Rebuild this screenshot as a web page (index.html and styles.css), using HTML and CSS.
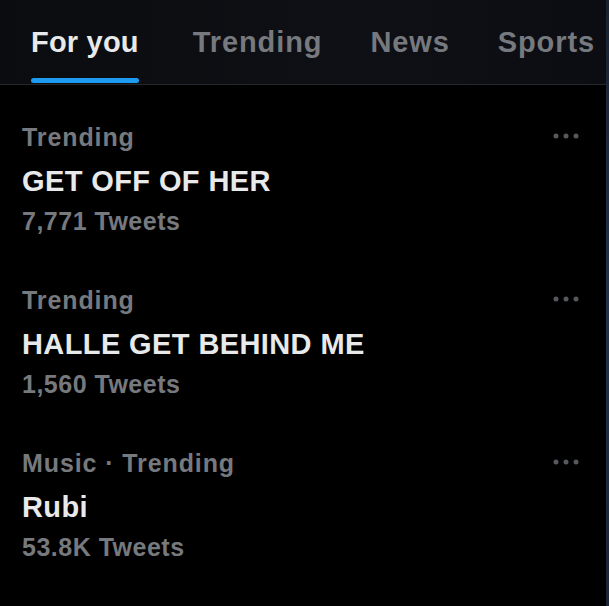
FILE: index.html
```html
<!DOCTYPE html>
<html>
<head>
<meta charset="utf-8">
<link rel="stylesheet" href="styles.css">
</head>
<body>
<div class="frame">
  <div class="main">
    <header class="tabs">
      <div class="tab active"><span class="label">For you</span><span class="bar"></span></div>
      <div class="tab"><span class="label">Trending</span></div>
      <div class="tab"><span class="label">News</span></div>
      <div class="tab"><span class="label">Sports</span></div>
    </header>
    <section class="list">
      <div class="item">
        <div class="text">
          <div class="meta">Trending</div>
          <div class="title">GET OFF OF HER</div>
          <div class="count">7,771 Tweets</div>
        </div>
        <svg class="more" width="26" height="6" viewBox="0 0 26 6"><circle cx="3" cy="3" r="2.5"/><circle cx="13" cy="3" r="2.5"/><circle cx="23" cy="3" r="2.5"/></svg>
      </div>
      <div class="item">
        <div class="text">
          <div class="meta">Trending</div>
          <div class="title">HALLE GET BEHIND ME</div>
          <div class="count">1,560 Tweets</div>
        </div>
        <svg class="more" width="26" height="6" viewBox="0 0 26 6"><circle cx="3" cy="3" r="2.5"/><circle cx="13" cy="3" r="2.5"/><circle cx="23" cy="3" r="2.5"/></svg>
      </div>
      <div class="item">
        <div class="text">
          <div class="meta">Music · Trending</div>
          <div class="title">Rubi</div>
          <div class="count">53.8K Tweets</div>
        </div>
        <svg class="more" width="26" height="6" viewBox="0 0 26 6"><circle cx="3" cy="3" r="2.5"/><circle cx="13" cy="3" r="2.5"/><circle cx="23" cy="3" r="2.5"/></svg>
      </div>
    </section>
  </div>
  <div class="edge"></div>
</div>
</body>
</html>
```
FILE: styles.css
```css
html, body {
  margin: 0;
  padding: 0;
  background: #000;
}
body {
  font-family: "Liberation Sans", Arial, sans-serif;
  font-weight: bold;
  width: 609px;
  height: 606px;
  overflow: hidden;
}
.frame {
  display: flex;
  height: 606px;
}
.main {
  flex: 1;
  display: flex;
  flex-direction: column;
  background: #000;
}
.edge {
  width: 3px;
  background: linear-gradient(#1a2230, #22324a 50%, #1a2535);
}
.tabs {
  display: flex;
  gap: 48px;
  padding: 25px 0 1px 31px;
  height: 58px;
  background: linear-gradient(90deg, #0b0c10, #0e1015 60%, #0b0d12);
  border-bottom: 1px solid #24272b;
}
.tab {
  display: flex;
  flex-direction: column;
  flex-shrink: 0;
}
.tab.active {
  margin-right: 6px;
}
.label {
  font-size: 29px;
  line-height: 34px;
  color: #76797e;
  letter-spacing: 0.9px;
}
.tab.active .label {
  color: #e7e9ea;
  letter-spacing: 0.2px;
}
.bar {
  margin-top: 19px;
  height: 5px;
  border-radius: 3px;
  background: #1d9bf0;
}
.list {
  display: flex;
  flex-direction: column;
  gap: 49px;
  padding: 37px 27px 0 22px;
}
.item {
  display: flex;
  justify-content: space-between;
  align-items: flex-start;
}
.text {
  display: flex;
  flex-direction: column;
}
.meta {
  font-size: 25px;
  line-height: 30px;
  color: #76797d;
  letter-spacing: 0.9px;
}
.title {
  margin-top: 12px;
  font-size: 29px;
  line-height: 34px;
  color: #e7e9ea;
  letter-spacing: 0.4px;
}
.count {
  margin-top: 8px;
  font-size: 25px;
  line-height: 30px;
  color: #76797d;
  letter-spacing: 0.5px;
}
.more {
  margin-top: 11px;
  fill: #55585c;
}
```
